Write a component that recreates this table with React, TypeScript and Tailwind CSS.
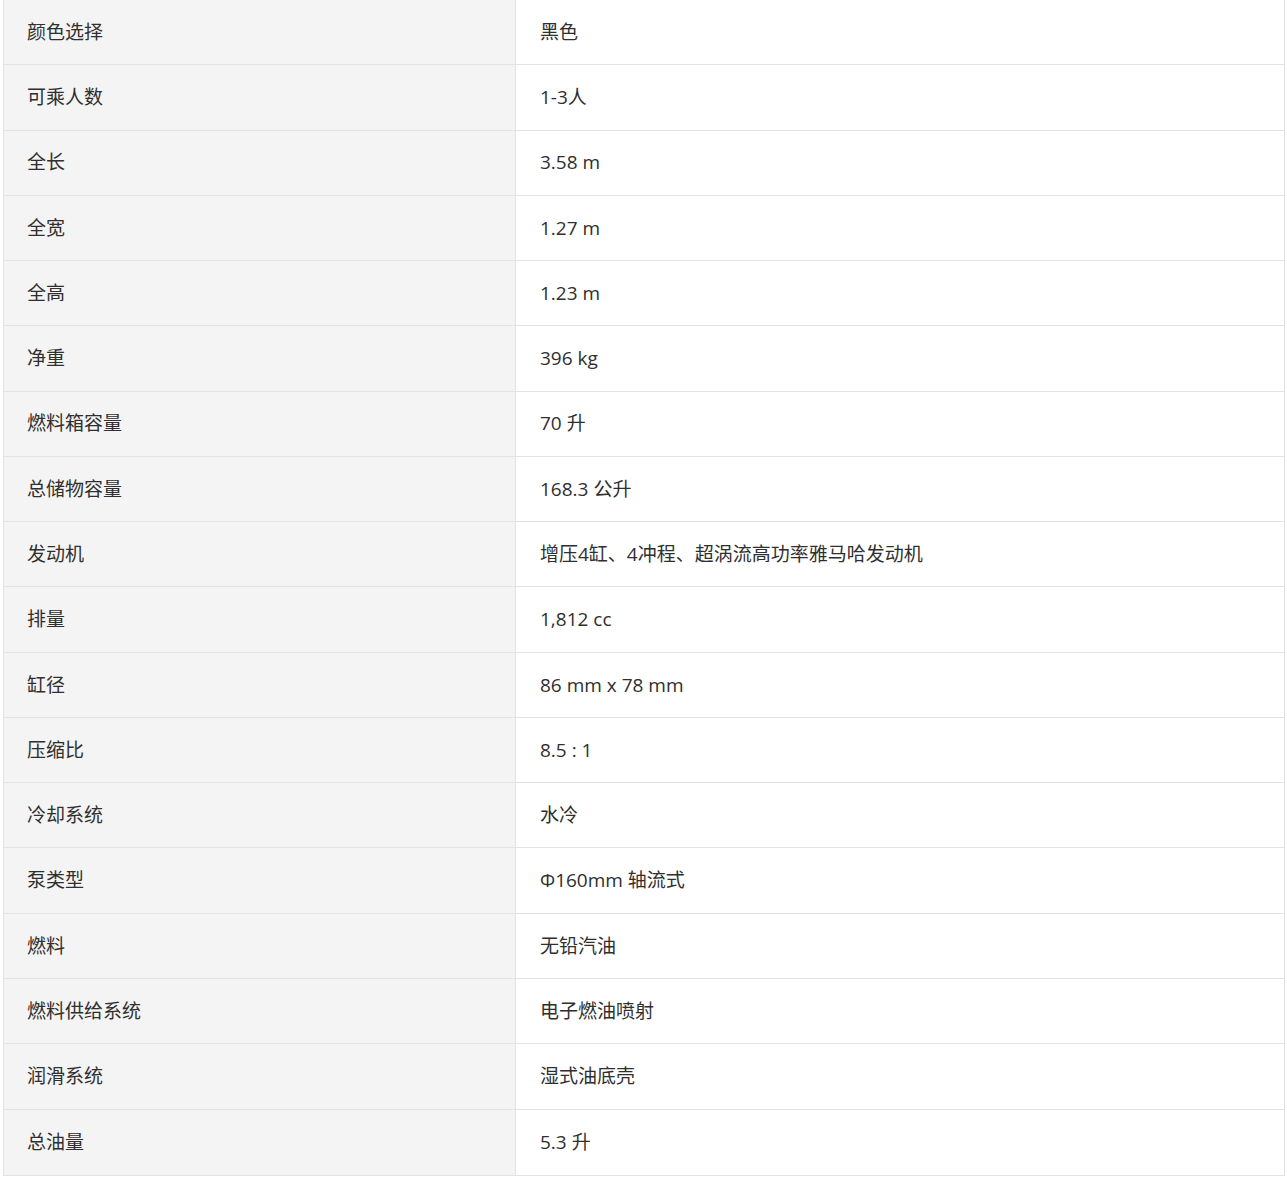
const rows: [string, string][] = [
  ["颜色选择", "黑色"],
  ["可乘人数", "1-3人"],
  ["全长", "3.58 m"],
  ["全宽", "1.27 m"],
  ["全高", "1.23 m"],
  ["净重", "396 kg"],
  ["燃料箱容量", "70 升"],
  ["总储物容量", "168.3 公升"],
  ["发动机", "增压4缸、4冲程、超涡流高功率雅马哈发动机"],
  ["排量", "1,812 cc"],
  ["缸径", "86 mm x 78 mm"],
  ["压缩比", "8.5 : 1"],
  ["冷却系统", "水冷"],
  ["泵类型", "Φ160mm 轴流式"],
  ["燃料", "无铅汽油"],
  ["燃料供给系统", "电子燃油喷射"],
  ["润滑系统", "湿式油底壳"],
  ["总油量", "5.3 升"],
];

export default function App() {
  return (
    <div className="bg-white min-h-[1200px] pl-[3px] pr-[2px] font-['Open_Sans','Noto_Sans_CJK_SC',sans-serif] text-[19px] text-[#2f2f2f]">
      <div className="-mt-px border border-[#e3e3e3] w-[1282px]">
        {rows.map(([k, v], i) => (
          <div
            key={k}
            className={`flex h-[65.28px] ${i < rows.length - 1 ? "border-b border-[#e3e3e3]" : ""}`}
          >
            <div className="w-[512px] shrink-0 bg-[#f4f4f4] border-r border-[#e3e3e3] flex items-center pl-[23px]">
              {k}
            </div>
            <div className="flex-1 flex items-center pl-[24px]">{v}</div>
          </div>
        ))}
      </div>
    </div>
  );
}
